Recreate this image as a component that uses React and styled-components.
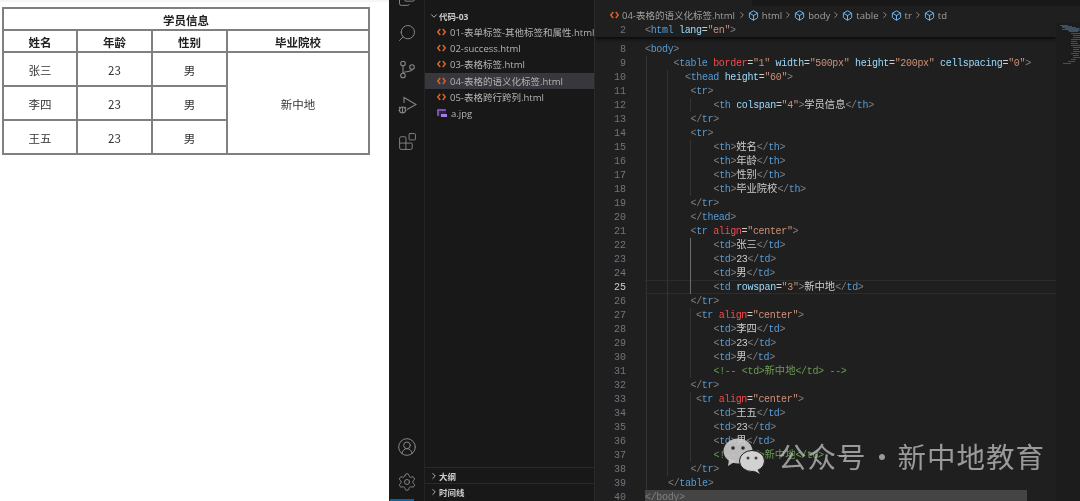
import React from "react";
import styled, { createGlobalStyle } from "styled-components";
import { Search, Blocks, CircleUserRound, Settings, Files, Box, ChevronRight, ChevronDown } from "lucide-react";

const GlobalStyle = createGlobalStyle`
  html, body {
    margin: 0;
    padding: 0;
    background: #fff;
  }
  #root {
    height: 100vh;
  }
`;

const Page = styled.div`
  display: flex;
  width: 1080px;
  height: 501px;
  overflow: hidden;
  position: relative;
  font-family: "Open Sans", "Noto Sans CJK SC", sans-serif;
  filter: blur(0.35px);
`;

/* left: the rendered table */
const Preview = styled.div`
  flex: 0 0 389px;
  box-sizing: border-box;
  padding: 5px 0 0 2px;
  background: #fff;
  border-top: 2px solid #f6f6f6;
`;

const InfoTable = styled.table`
  width: 366px;
  height: 146px;
  table-layout: fixed;
  border-collapse: collapse;
  border: 2px solid #8a8a8a;
  font-family: "Noto Sans CJK SC", sans-serif;
  font-size: 11.5px;
  color: #333;
`;

const Th = styled.th`
  border: 2px solid #808080;
  height: 18px;
  padding: 2px 0 0;
  font-weight: 700;
  color: #222;
  text-align: center;
`;

const Td = styled.td`
  border: 2px solid #808080;
  height: 30px;
  padding: 2px 0 0;
  text-align: center;
`;

/* activity bar */
const ActivityBar = styled.div`
  flex: 0 0 35px;
  box-sizing: border-box;
  display: flex;
  flex-direction: column;
  background: #181818;
  border-left: 1px solid #1c1c1c;
  overflow: hidden;
  color: #858585;
`;

const ActivityTop = styled.div`
  margin-top: -21px;
  display: flex;
  flex-direction: column;
`;

const ActivityBottom = styled.div`
  margin-top: auto;
  display: flex;
  flex-direction: column;
`;

const ActivityItem = styled.div`
  height: ${({ $h }) => $h || 36}px;
  display: flex;
  align-items: center;
  justify-content: center;
`;

const StatusTip = styled.div`
  width: 24px;
  height: 2px;
  background: #0e639c;
`;

/* explorer */
const Sidebar = styled.div`
  flex: 0 0 170px;
  min-width: 0;
  box-sizing: border-box;
  display: flex;
  flex-direction: column;
  background: #181818;
  border-left: 1px solid #242424;
  color: #b4b4b4;
  font-size: 9.5px;
  overflow: hidden;
`;

const FolderHead = styled.div`
  display: flex;
  align-items: center;
  height: 16px;
  margin-top: 8px;
  padding-left: 4px;
  font-size: 8.5px;
  font-weight: 700;
  color: #cccccc;
`;

const FileRow = styled.div`
  display: flex;
  align-items: center;
  gap: 4px;
  height: 16.2px;
  padding-left: 12px;
  white-space: nowrap;
  overflow: hidden;
  background: ${({ $active }) => ($active ? "#37373d" : "transparent")};
`;

const PanelRow = styled.div`
  display: flex;
  align-items: center;
  height: 16px;
  padding-left: 4px;
  font-size: 8.5px;
  font-weight: 700;
  color: #cccccc;
  border-top: 1px solid #2a2a2a;
  box-sizing: border-box;
`;

const SidebarBottom = styled.div`
  margin-top: auto;
  padding-bottom: 2px;
`;

/* editor */
const Editor = styled.div`
  flex: 1;
  min-width: 0;
  display: flex;
  flex-direction: column;
  background: #1f1f1f;
  border-left: 1px solid #2a2a2a;
`;

const TabStrip = styled.div`
  height: 6px;
  margin-left: 157px;
  background: #181818;
  margin-bottom: 1px;
`;

const Breadcrumb = styled.div`
  height: 16px;
  flex: 0 0 16px;
  display: flex;
  align-items: center;
  padding-left: 15px;
  font-size: 9.5px;
  color: #a0a0a0;
  white-space: nowrap;
`;

const Crumb = styled.span`
  display: inline-flex;
  align-items: center;
  gap: ${({ $inner }) => $inner || 1}px;
  margin-right: ${({ $gap }) => $gap || 0}px;
`;

const EditorBody = styled.div`
  flex: 1;
  min-height: 0;
  display: flex;
`;

const Code = styled.div`
  flex: 1;
  min-width: 0;
  overflow: hidden;
  font-family: "Liberation Mono", "Noto Sans CJK SC", monospace;
  font-size: 10px;
  letter-spacing: -0.33px;
`;

const StickyLine = styled.div`
  margin-bottom: 4.5px;
  box-shadow: 0 2px 3px #0b0b0b;
  position: relative;
`;

const LineRow = styled.div`
  display: flex;
  height: 14px;
  line-height: 15px;
`;

const LineNo = styled.div`
  flex: 0 0 31px;
  text-align: right;
  letter-spacing: 0;
  color: ${({ $active }) => ($active ? "#cccccc" : "#6e7681")};
`;

const LineBody = styled.div`
  margin-left: 19px;
  flex: ${({ $selected }) => ($selected ? "0 0 382px" : "1")};
  position: relative;
  box-sizing: border-box;
  white-space: pre;
  padding-left: ${({ $x }) => $x}px;
  background: ${({ $selected }) => ($selected ? "#444444" : "transparent")};
  box-shadow: ${({ $active }) => ($active ? "inset 0 1px 0 #2c2c2c, inset 0 -1px 0 #2c2c2c" : "none")};
`;

const Guide = styled.span`
  position: absolute;
  top: 0;
  bottom: 0;
  left: ${({ $left }) => $left}px;
  width: 1px;
  background: ${({ $active }) => ($active ? "#6e6e6e" : "#333333")};
`;

const colors = {
  punct: "#808080",
  tag: "#569cd6",
  attr: "#9cdcfe",
  bad: "#f14c4c",
  str: "#ce9178",
  text: "#cccccc",
  eq: "#cccccc",
  comment: "#6a9955",
};

const Tok = styled.span`
  color: ${({ $kind }) => colors[$kind]};
  font-size: ${({ $cjk }) => ($cjk ? "10.3px" : "inherit")};
  letter-spacing: ${({ $cjk }) => ($cjk ? "0" : "inherit")};
`;

const Minimap = styled.div`
  flex: 0 0 24px;
  background: #1c1c1c;
`;

/* watermark over the code */
const Watermark = styled.div`
  position: absolute;
  left: 723px;
  top: 438px;
  display: flex;
  align-items: center;
  color: rgba(190, 190, 190, 0.78);
  font-family: "Noto Sans CJK SC", sans-serif;
  font-size: 28.5px;
  line-height: 36px;
  letter-spacing: 1px;
  white-space: nowrap;
`;

const WatermarkDot = styled.span`
  flex: 0 0 31px;
  text-align: center;
  letter-spacing: 0;
`;

const WatermarkLogo = styled.span`
  display: flex;
  margin-right: 13px;
`;

const lines = [
  [8, 645, "<body>"],
  [9, 673.5, '<table border="1" width="500px" height="200px" cellspacing="0">'],
  [10, 685, '<thead height="60">'],
  [11, 690.5, "<tr>"],
  [12, 713.5, '<th colspan="4">学员信息</th>'],
  [13, 690.5, "</tr>"],
  [14, 690.5, "<tr>"],
  [15, 713.5, "<th>姓名</th>"],
  [16, 713.5, "<th>年龄</th>"],
  [17, 713.5, "<th>性别</th>"],
  [18, 713.5, "<th>毕业院校</th>"],
  [19, 690.5, "</tr>"],
  [20, 690.5, "</thead>"],
  [21, 690.5, '<tr align="center">'],
  [22, 713.5, "<td>张三</td>"],
  [23, 713.5, "<td>23</td>"],
  [24, 713.5, "<td>男</td>"],
  [25, 713.5, '<td rowspan="3">新中地</td>'],
  [26, 690.5, "</tr>"],
  [27, 696, '<tr align="center">'],
  [28, 713.5, "<td>李四</td>"],
  [29, 713.5, "<td>23</td>"],
  [30, 713.5, "<td>男</td>"],
  [31, 713.5, "<!-- <td>新中地</td> -->"],
  [32, 690.5, "</tr>"],
  [33, 696, '<tr align="center">'],
  [34, 713.5, "<td>王五</td>"],
  [35, 713.5, "<td>23</td>"],
  [36, 713.5, "<td>男</td>"],
  [37, 713.5, "<!-- <td>新中地</td> -->"],
  [38, 690.5, "</tr>"],
  [39, 668, "</table>"],
  [40, 645, "</body>"],
];

const hasCjk = (s) => /[^\x00-\x7f]/.test(s);

// small html colouring, enough for the lines above
const tokenize = (text) => {
  if (text.startsWith("<!--")) {
    return text.split(/([^\x00-\x7f]+)/).filter(Boolean).map((s) => ["comment", s]);
  }
  const out = [];
  const re = /(<\/?)(\w+)|([a-z]+)(=)("[^"]*")|(>)|(\s+)|([^<>\s]+)/g;
  for (const m of text.matchAll(re)) {
    if (m[1]) out.push(["punct", m[1]], ["tag", m[2]]);
    else if (m[3]) {
      out.push([m[3] === "border" || m[3] === "align" ? "bad" : "attr", m[3]], ["eq", m[4]], ["str", m[5]]);
    } else if (m[6]) out.push(["punct", m[6]]);
    else out.push(["text", m[0]]);
  }
  return out;
};

const guidesFor = (n) => {
  const list = [];
  if (n >= 9 && n <= 39) list.push([0.5, false]);
  if (n >= 10 && n <= 38) list.push([22, false]);
  const inner = n === 12 || (n >= 15 && n <= 18) || (n >= 27 && n <= 31) || (n >= 33 && n <= 37);
  if (inner) list.push([45, false]);
  if (n >= 22 && n <= 25) list.push([45, true]);
  return list;
};

const CodeLine = ({ n, x, text }) => (
  <LineRow>
    <LineNo $active={n === 25}>{n}</LineNo>
    <LineBody $x={x - 645} $active={n === 25} $selected={n === 40}>
      {guidesFor(n).map(([left, active]) => (
        <Guide key={left} $left={left} $active={active} />
      ))}
      {tokenize(text).map(([kind, s], i) => (
        <Tok key={i} $kind={n === 40 ? "punct" : kind} $cjk={hasCjk(s)}>
          {s}
        </Tok>
      ))}
    </LineBody>
  </LineRow>
);

const TagIcon = () => (
  <svg width="9" height="8" viewBox="0 0 9 8" fill="none" stroke="#d9622b" strokeWidth="1.5" style={{ flex: "0 0 9px" }}>
    <path d="M3.200 1L.8 4l2.400 3M5.800 1l2.400 3-2.400 3" />
  </svg>
);

const BranchIcon = () => (
  <svg width="17" height="19" viewBox="0 0 17 19" fill="none" stroke="currentColor" strokeWidth="1.1">
    <circle cx="4" cy="3.500" r="2.300" />
    <circle cx="13" cy="7" r="2.300" />
    <circle cx="4" cy="15.500" r="2.300" />
    <path d="M4 6v7M13 9.500c0 3-9 1.500-9 3.500" />
  </svg>
);

const RunIcon = () => (
  <svg width="19" height="19" viewBox="0 0 19 19" fill="none" stroke="currentColor" strokeWidth="1.1">
    <path d="M6 7V1.500L18 8.500 9 13.500" />
    <circle cx="4.500" cy="14" r="3" />
    <path d="M1 11l1.500 1.200M8 11l-1.500 1.200M.5 14.500H2M7 14.500h1.500M4.500 11v6" />
  </svg>
);

const ImageIcon = () => (
  <svg width="10" height="9" viewBox="0 0 10 9" style={{ flex: "0 0 10px" }}>
    <rect x="0" y="0" width="9" height="7" rx="1" fill="#7b4fb3" />
    <rect x="2" y="2" width="7" height="5" fill="#2c2340" />
    <rect x="4" y="5" width="6" height="3" fill="#a77be0" />
  </svg>
);

const WechatLogo = () => (
  <svg width="42" height="36" viewBox="0 0 42 36" fill="rgba(205,205,205,0.9)">
    <ellipse cx="15" cy="13" rx="14.500" ry="12.500" />
    <path d="M6 21l-1 7 8-5z" />
    <ellipse cx="29" cy="23" rx="12.500" ry="10.500" fill="#d2d2d2" stroke="#222" strokeWidth="1" />
    <path d="M34 31l3 5-7-4z" fill="#d2d2d2" />
    <circle cx="10" cy="10" r="1.800" fill="#2a2a2a" />
    <circle cx="20" cy="10" r="1.800" fill="#2a2a2a" />
    <circle cx="25" cy="20" r="1.500" fill="#444" />
    <circle cx="33" cy="20" r="1.500" fill="#444" />
  </svg>
);

const minimapBars = [
  [2, 0, 8], [3, 2, 10], [4, 2, 14], [6, 2, 7], [5, 5, 16], [6, 7, 12], [7, 8, 16], [8, 9, 9],
  [10, 11, 10], [12, 13, 8], [14, 13, 10], [16, 11, 9], [18, 11, 6], [20, 11, 7], [22, 11, 12],
  [24, 13, 7], [26, 13, 6], [28, 13, 9], [30, 11, 8], [32, 13, 6], [34, 13, 7], [36, 11, 5], [38, 8, 7], [40, 3, 8],
];

const files = [
  "01-表单标签-其他标签和属性.html",
  "02-success.html",
  "03-表格标签.html",
  "04-表格的语义化标签.html",
  "05-表格跨行跨列.html",
];

const App = () => {
  return (
    <Page>
      <GlobalStyle />
      <Preview>
        <InfoTable>
          <colgroup>
            <col style={{ width: "74px" }} />
            <col style={{ width: "75px" }} />
            <col style={{ width: "75px" }} />
            <col style={{ width: "142px" }} />
          </colgroup>
          <thead>
            <tr>
              <Th colSpan="4">学员信息</Th>
            </tr>
            <tr>
              <Th>姓名</Th>
              <Th>年龄</Th>
              <Th>性别</Th>
              <Th>毕业院校</Th>
            </tr>
          </thead>
          <tbody>
            <tr>
              <Td>张三</Td>
              <Td>23</Td>
              <Td>男</Td>
              <Td rowSpan="3">新中地</Td>
            </tr>
            <tr>
              <Td>李四</Td>
              <Td>23</Td>
              <Td>男</Td>
            </tr>
            <tr>
              <Td>王五</Td>
              <Td>23</Td>
              <Td>男</Td>
            </tr>
          </tbody>
        </InfoTable>
      </Preview>

      <ActivityBar>
        <ActivityTop>
          <ActivityItem><Files size={20} strokeWidth={1.2} /></ActivityItem>
          <ActivityItem><Search size={20} strokeWidth={1.2} style={{ transform: "scaleX(-1)" }} /></ActivityItem>
          <ActivityItem><BranchIcon /></ActivityItem>
          <ActivityItem><RunIcon /></ActivityItem>
          <ActivityItem><Blocks size={19} strokeWidth={1.2} /></ActivityItem>
        </ActivityTop>
        <ActivityBottom>
          <ActivityItem $h={35}><CircleUserRound size={20} strokeWidth={1.2} /></ActivityItem>
          <ActivityItem $h={35}><Settings size={20} strokeWidth={1.2} /></ActivityItem>
          <StatusTip />
        </ActivityBottom>
      </ActivityBar>

      <Sidebar>
        <FolderHead>
          <ChevronDown size={10} />
          代码-03
        </FolderHead>
        {files.map((name, i) => (
          <FileRow key={name} $active={i === 3}>
            <TagIcon />
            {name}
          </FileRow>
        ))}
        <FileRow>
          <ImageIcon />
          a.jpg
        </FileRow>
        <SidebarBottom>
          <PanelRow>
            <ChevronRight size={10} />
            大纲
          </PanelRow>
          <PanelRow>
            <ChevronRight size={10} />
            时间线
          </PanelRow>
        </SidebarBottom>
      </Sidebar>

      <Editor>
        <TabStrip />
        <Breadcrumb>
          <Crumb $gap={2} $inner={3}>
            <TagIcon />
            04-表格的语义化标签.html
          </Crumb>
          {["html", "body", "table", "tr", "td"].map((part) => (
            <Crumb key={part}>
              <ChevronRight size={10} />
              <Crumb $gap={1} $inner={3}>
                <Box size={11} color="#75beff" />
                {part}
              </Crumb>
            </Crumb>
          ))}
        </Breadcrumb>
        <EditorBody>
          <Code>
            <StickyLine>
              <CodeLine n={2} x={645} text={'<html lang="en">'} />
            </StickyLine>
            {lines.map(([n, x, text]) => (
              <CodeLine key={n} n={n} x={x} text={text} />
            ))}
          </Code>
          <Minimap>
            <svg width="24" height="60" viewBox="0 0 24 60">
              {minimapBars.map(([y, x, w]) => (
                <rect key={y} x={x + 4} y={y} width={w} height="1" fill="#3f5060" />
              ))}
            </svg>
          </Minimap>
        </EditorBody>
      </Editor>

      <Watermark>
        <WatermarkLogo>
          <WechatLogo />
        </WatermarkLogo>
        公众号
        <WatermarkDot>·</WatermarkDot>
        新中地教育
      </Watermark>
    </Page>
  );
};

export default App;
